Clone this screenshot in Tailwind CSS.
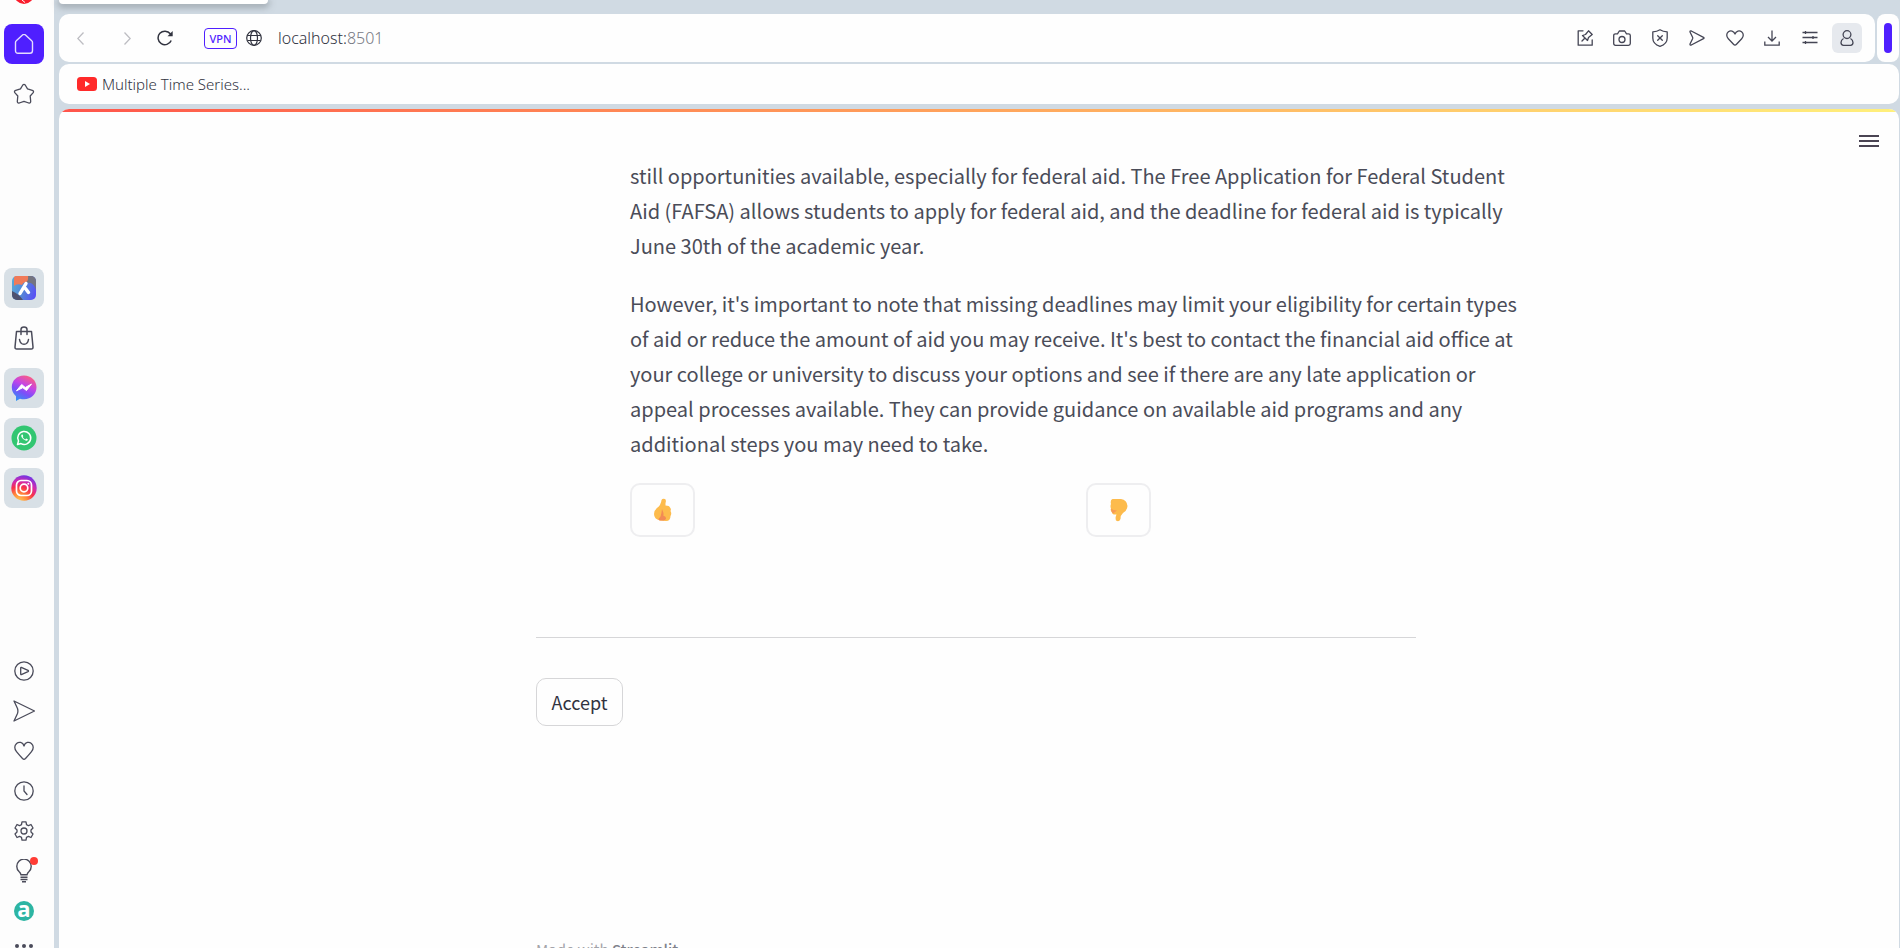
<!DOCTYPE html>
<html lang="en">
<head>
<meta charset="utf-8">
<title>localhost:8501</title>
<script src="https://cdn.jsdelivr.net/npm/@tailwindcss/browser@4"></script>
</head>
<body class="h-screen overflow-hidden bg-[#d0dae3] flex gap-[5px] font-['Noto_Sans_CJK_SC','Noto_Sans',sans-serif] text-[#31333f]">

<!-- Browser sidebar -->
<nav aria-label="Sidebar" class="w-[54px] h-full shrink-0 bg-[#fdfdfd] pl-1 flex flex-col text-[#4a4b5a] overflow-hidden">
  <div class="h-6 shrink-0 w-10 flex justify-center items-start">
    <svg class="w-5 h-1" viewBox="0 16 20 4" aria-hidden="true"><circle cx="10" cy="10" r="7.5" fill="none" stroke="#fa1e2d" stroke-width="5"/><path d="M8 16L11 18.500" stroke="#fff" stroke-width="1"/></svg>
  </div>
  <button aria-label="Home" class="w-10 h-10 shrink-0 rounded-lg bg-[#4f1fff] text-[#e4dcff] grid place-items-center">
    <svg class="w-5 h-5" viewBox="0 0 20 20" fill="none" stroke="currentColor" stroke-width="1.4" stroke-linejoin="round"><path d="M1.5 8.5Q1.5 7.5 2.3 6.8L8.5 1Q10 -.2 11.5 1L17.700 6.800Q18.500 7.500 18.500 8.500V16.500Q18.500 19.300 16 19.300H4Q1.500 19.300 1.500 16.500Z"/></svg>
  </button>
  <button aria-label="Favourites" class="w-10 h-10 shrink-0 mt-[10px] grid place-items-center">
    <svg class="w-[22px] h-[22px]" viewBox="0 0 22 22" fill="none" stroke="currentColor" stroke-width="1.3" stroke-linejoin="round"><path d="M9.800 2Q11 .6 12.200 2L14.500 5.800L19.300 7.300Q21.200 8 20.200 9.600L17.200 13L17.700 18.500Q17.600 20.400 15.800 20L11 18.300L6.200 20Q4.400 20.400 4.300 18.500L4.800 13L1.800 9.600Q.8 8 2.700 7.300L7.500 5.800Z"/></svg>
  </button>
  <div class="mt-[154px] shrink-0 flex flex-col gap-[10px]">
    <button aria-label="Aria" class="w-10 h-10 rounded-lg bg-[#d8e0e6] grid place-items-center">
      <svg class="w-6 h-6" viewBox="0 0 24 24"><defs><linearGradient id="ar" x1="0" y1="0.4" x2="1" y2="0.7"><stop offset="0" stop-color="#58a6d8"/><stop offset=".5" stop-color="#5583d8"/><stop offset="1" stop-color="#5a50f5"/></linearGradient><clipPath id="ac"><rect width="24" height="24" rx="5"/></clipPath></defs><g clip-path="url(#ac)"><rect width="24" height="24" fill="url(#ar)"/><path d="M2 0H18V6Q12 5 10 9Q5 7 2 10Z" fill="#f07a58"/><path d="M16 0H24V14C22 7 18 6 13 7Q17 5 16 0Z" fill="#74747f"/><path d="M0 15Q7 18 11 24H0Z" fill="#4e5170"/></g><path d="M14 7.500L8 17.500M13.500 12.500L16.500 16.500" stroke="#fff" stroke-width="3.400" stroke-linecap="round"/></svg>
    </button>
    <button aria-label="Shopping" class="w-10 h-10 grid place-items-center">
      <svg class="w-5 h-6" viewBox="0 0 20 24" fill="none" stroke="currentColor" stroke-width="1.500" stroke-linecap="round" stroke-linejoin="round"><path d="M2.500 5.500H17.500L19 21Q19.100 23 17.300 23H2.700Q.9 23 1 21ZM7 8.500V3.500Q7 1 10 1T13 3.500V8.500M5.500 13.500Q6.200 18.300 10 18.300T14.500 13.500"/></svg>
    </button>
    <button aria-label="Messenger" class="w-10 h-10 rounded-lg bg-[#d8e0e6] grid place-items-center">
      <svg class="w-[26px] h-[26px]" viewBox="0 0 26 26"><defs><linearGradient id="ms" x1=".75" y1="0" x2=".25" y2="1"><stop offset="0" stop-color="#ff5f7a"/><stop offset=".4" stop-color="#c244e8"/><stop offset=".65" stop-color="#7b4ff8"/><stop offset="1" stop-color="#2f94f5"/></linearGradient></defs><path d="M13 .5C5.800 .5 .8 5.600 .8 12.300Q.8 17.500 5 21.300V26L9 23.700Q11 24.200 13 24.200C20.200 24.200 25.500 19 25.500 12.300S20.200 .5 13 .5Z" fill="url(#ms)"/><path d="M5.500 15.800L10.700 9.500L14.300 12.500L20.500 9L15.500 15.500L11.800 12.700Z" fill="#fff" stroke="#fff" stroke-linejoin="round"/></svg>
    </button>
    <button aria-label="WhatsApp" class="w-10 h-10 rounded-lg bg-[#d8e0e6] grid place-items-center">
      <svg class="w-[26px] h-[26px]" viewBox="0 0 26 26"><circle cx="13" cy="13" r="12.500" fill="#32c671"/><path d="M6.500 19.500L7.500 16A6.500 6.500 0 1 1 10 18.600Z" fill="none" stroke="#fff" stroke-width="1.500" stroke-linejoin="round"/><path d="M10.800 9.500Q9.700 10.500 10.500 12Q12 15 15 15.800Q16.500 16 17 14.500L15.200 13.500L14.300 14.400Q12.500 13.600 11.700 12L12.300 11.200L11.600 9.500Z" fill="#fff"/></svg>
    </button>
    <button aria-label="Instagram" class="w-10 h-10 rounded-lg bg-[#d8e0e6] grid place-items-center">
      <svg class="w-[26px] h-[26px]" viewBox="0 0 26 26"><defs><radialGradient id="ig" cx=".3" cy="1.050" r="1.100"><stop offset="0" stop-color="#ffd05a"/><stop offset=".3" stop-color="#ff8a3a"/><stop offset=".55" stop-color="#f7304c"/><stop offset=".75" stop-color="#d02bb0"/><stop offset="1" stop-color="#6a35e8"/></radialGradient></defs><circle cx="13" cy="13" r="12.700" fill="url(#ig)"/><g fill="none" stroke="#fff" stroke-width="1.700"><rect x="5.500" y="5.500" width="15" height="15" rx="4.500"/><circle cx="13" cy="13" r="3.800"/></g><circle cx="17.300" cy="8.700" r="1" fill="#fff"/></svg>
    </button>
  </div>
  <div class="mt-[143px] shrink-0 flex flex-col">
    <button aria-label="Player" class="w-10 h-10 grid place-items-center"><svg class="w-5 h-5" viewBox="0 0 20 20" fill="none" stroke="currentColor" stroke-width="1.300" stroke-linejoin="round"><circle cx="10" cy="10" r="9.200"/><path d="M7.300 6.300L14 9.300Q15 10 14 10.600L7.300 13.600Q6.700 13.800 6.700 13V7Q6.700 6.200 7.300 6.300Z"/></svg></button>
    <button aria-label="My Flow" class="w-10 h-10 grid place-items-center"><svg class="w-[22px] h-[22px]" viewBox="0 0 22 22" fill="none" stroke="currentColor" stroke-width="1.300" stroke-linejoin="round"><path d="M1 1L21.500 11L1 21L4.500 13.500Q5.300 11 4.500 8.500Z"/></svg></button>
    <button aria-label="Bookmarks" class="w-10 h-10 grid place-items-center"><svg class="w-5 h-5" viewBox="0 0 20 20" fill="none" stroke="currentColor" stroke-width="1.300" stroke-linejoin="round"><path d="M10 5C8.800 .8 4.800 .6 2.600 2.400C.2 4.500 .2 8 2.500 10.600Q5 13.700 8.500 17.500Q10 19 11.500 17.500Q15 13.700 17.500 10.600C19.800 8 19.800 4.500 17.400 2.400C15.200 .6 11.200 .8 10 5Z"/></svg></button>
    <button aria-label="History" class="w-10 h-10 grid place-items-center"><svg class="w-5 h-5" viewBox="0 0 20 20" fill="none" stroke="currentColor" stroke-width="1.300" stroke-linecap="round"><circle cx="10" cy="10" r="9.200"/><path d="M10 5V10L13 13.500"/></svg></button>
    <button aria-label="Settings" class="w-10 h-10 grid place-items-center"><svg class="w-5 h-5" viewBox="0 0 20 20" fill="none" stroke="currentColor" stroke-width="1.300" stroke-linejoin="round"><circle cx="10" cy="10" r="3"/><path d="M8 .8H12L12.500 3.600L14.500 4.700L17 3.500L19 7L17 9V11L19 13L17 16.500L14.500 15.300L12.500 16.400L12 19.200H8L7.500 16.400L5.500 15.300L3 16.500L1 13L3 11V9L1 7L3 3.500L5.500 4.700L7.500 3.600Z"/></svg></button>
    <button aria-label="Tips" class="relative w-10 h-10 grid place-items-center"><svg class="w-4 h-6" viewBox="0 0 16 24" fill="none" stroke="currentColor" stroke-width="1.400"><path d="M5 15.800Q4.700 14 3 12.500A7.200 7.200 0 1 1 13 12.500Q11.300 14 11 15.800ZM4.500 18.200H11.500M4.500 20.500H11.500M6 22.800H10"/></svg><span class="absolute right-[6px] top-[6px] w-2 h-2 rounded-full bg-[#ff3c35]"></span></button>
    <button aria-label="Amazon Alexa" class="w-10 h-10 grid place-items-center"><span class="w-5 h-5 rounded-full bg-[#2db5a3] text-white font-['Open_Sans',sans-serif] font-bold text-[22px] leading-[14px] grid justify-center">a</span></button>
    <button aria-label="More" class="w-10 h-[17px] flex justify-center items-end gap-[3px]"><span class="w-1 h-1 rounded-full bg-[#4a4b5a]"></span><span class="w-1 h-1 rounded-full bg-[#4a4b5a]"></span><span class="w-1 h-1 rounded-full bg-[#4a4b5a]"></span></button>
  </div>
</nav>

<div class="flex-1 min-w-0 flex flex-col pr-px">
  <!-- Tab strip -->
  <div class="h-[14px] shrink-0"><div class="w-[209px] h-1 bg-white rounded-b-lg shadow-[0_2px_6px_2px_#8f989fb0]"></div></div>

  <!-- Address bar -->
  <div class="flex gap-[2px] shrink-0">
    <header class="flex-1 h-12 rounded-[10px] bg-[#fefefe] flex items-center justify-between pl-[11px] pr-[13px] font-['Noto_Sans',sans-serif]">
      <div class="flex items-center">
        <button aria-label="Back" class="w-5 h-6 grid place-items-center text-[#bdbdc2]"><svg class="w-[7px] h-[13px]" viewBox="0 0 7 13" fill="none" stroke="currentColor" stroke-width="1.300"><path d="M6.500 .5L.8 6.500L6.500 12.500"/></svg></button>
        <button aria-label="Forward" class="ml-[27px] w-5 h-6 grid place-items-center text-[#bdbdc2]"><svg class="w-[7px] h-[13px]" viewBox="0 0 7 13" fill="none" stroke="currentColor" stroke-width="1.300"><path d="M.5 .5L6.200 6.500L.5 12.500"/></svg></button>
        <button aria-label="Reload" class="ml-[18px] w-5 h-6 grid place-items-center"><svg class="w-4 h-4" viewBox="0 0 16 16" fill="none" stroke="currentColor" stroke-width="1.500"><path d="M14.200 10.500A6.800 6.800 0 1 1 13.300 3.800L14.300 5"/><path d="M15.700 1V6.200H10.500Z" fill="currentColor" stroke="none"/></svg></button>
        <button class="ml-[29px] w-[33px] h-[21px] rounded border border-[#4f1fff] text-[#4f1fff] text-[11px] leading-5 font-medium text-center">VPN</button>
        <svg class="ml-[9px] w-4 h-4" viewBox="0 0 16 16" fill="none" stroke="currentColor" stroke-width="1.200" aria-hidden="true"><circle cx="8" cy="8" r="7.300"/><ellipse cx="8" cy="8" rx="3.500" ry="7.300"/><path d="M1.500 5.500H14.500M1.500 10.500H14.500"/></svg>
        <a href="#" class="ml-4 text-base font-light text-[#31333f]">localhost:<span class="text-[#777983]">8501</span></a>
      </div>
      <div class="flex items-center justify-between w-[292px] text-[#454655]">
        <button aria-label="Pinboard" class="w-[30px] h-[30px] grid place-items-center"><svg class="w-4 h-4" viewBox="0 0 16 16" fill="none" stroke="currentColor" stroke-width="1.300" stroke-linejoin="round" stroke-linecap="round"><path d="M6 .8H1.200V15.200H15.200V10M11.500 .8L15.200 4.500L11.500 7.500L10.500 10.500L5.500 5.500L8.500 4.500ZM8 8L5 11"/></svg></button>
        <button aria-label="Snapshot" class="w-[30px] h-[30px] grid place-items-center"><svg class="w-[18px] h-4" viewBox="0 0 18 16" fill="none" stroke="currentColor" stroke-width="1.300" stroke-linejoin="round"><path d="M2.500 3.800H4.500L6.300 1H11.700L13.500 3.800H15.500Q17.300 3.800 17.300 5.500V13.500Q17.300 15.300 15.500 15.300H2.500Q.7 15.300 .7 13.500V5.500Q.7 3.800 2.500 3.800Z"/><circle cx="9" cy="9.500" r="3"/></svg></button>
        <button aria-label="Tracker blocker" class="w-[30px] h-[30px] grid place-items-center"><svg class="w-4 h-[18px]" viewBox="0 0 16 18" fill="none" stroke="currentColor" stroke-width="1.300" stroke-linejoin="round" stroke-linecap="round"><path d="M8 .8Q11 2.800 15.200 2.800V9Q15.200 15 8 17.300Q.8 15 .8 9V2.800Q5 2.800 8 .8ZM5.700 6.700L10.300 11.300M10.300 6.700L5.700 11.300"/></svg></button>
        <button aria-label="Send" class="w-[30px] h-[30px] grid place-items-center"><svg class="w-4 h-4" viewBox="0 0 16 16" fill="none" stroke="currentColor" stroke-width="1.300" stroke-linejoin="round"><path d="M2.300 1L14.500 7.300Q15.600 8 14.500 8.700L2.300 15Q.8 15.300 1 14L3.600 8.700Q3.900 8 3.600 7.300L1 2Q.8 .7 2.300 1Z"/></svg></button>
        <button aria-label="Bookmark" class="w-[30px] h-[30px] grid place-items-center"><svg class="w-[18px] h-4" viewBox="0 0 18 16" fill="none" stroke="currentColor" stroke-width="1.300" stroke-linejoin="round"><path d="M9 4C7.900 .6 4.500 .2 2.400 1.700C.2 3.500 .2 6.500 2.300 8.700L7.500 14.300Q9 15.900 10.500 14.300L15.700 8.700C17.800 6.500 17.800 3.500 15.600 1.700C13.500 .2 10.100 .6 9 4Z"/></svg></button>
        <button aria-label="Downloads" class="w-[30px] h-[30px] grid place-items-center"><svg class="w-4 h-4" viewBox="0 0 16 16" fill="none" stroke="currentColor" stroke-width="1.300"><path d="M8 .5V11M4 7L8 11L12 7M.8 11.500V15.200H15.200V11.500"/></svg></button>
        <button aria-label="Easy setup" class="w-[30px] h-[30px] grid place-items-center"><svg class="w-4 h-4" viewBox="0 0 16 16" fill="none" stroke="currentColor" stroke-width="1.300"><path d="M.5 2.500H15.500M.5 7.500H15.500M.5 12.500H15.500M3.500 1V4M11 6V9M3.500 11V14"/></svg></button>
        <button aria-label="Profile" class="w-[30px] h-[30px] rounded-md bg-[#e6e9ee] grid place-items-center"><svg class="w-4 h-4" viewBox="0 0 16 16" fill="none" stroke="currentColor" stroke-width="1.300" stroke-linejoin="round"><circle cx="8" cy="4.600" r="3.900"/><path d="M4.500 8.500Q2 9.800 2 12.500Q2 15.300 4.500 15.300H11.500Q14 15.300 14 12.500Q14 9.800 11.500 8.500"/></svg></button>
      </div>
    </header>
    <div class="w-[22px] h-12 rounded-lg bg-[#fefefe] grid place-items-center"><button aria-label="Side panel" class="w-2 h-[30px] rounded bg-[#4f1fff]"></button></div>
  </div>

  <!-- Bookmarks bar -->
  <div class="mt-[2px] h-10 shrink-0 rounded-[10px] bg-[#fefefe] flex items-center pl-[18px]">
    <a href="#" class="flex items-center gap-[5px] font-['Noto_Sans',sans-serif] font-light text-[15px]">
      <svg class="w-5 h-[14px]" viewBox="0 0 20 14" aria-hidden="true"><rect width="20" height="14" rx="3.500" fill="#ff2a2a"/><path d="M8 4L13 7L8 10Z" fill="#fff"/></svg>
      Multiple Time Series...
    </a>
  </div>

  <!-- Streamlit page -->
  <div class="mt-[5px] flex-1 min-h-0 rounded-t-[10px] bg-[#fefefe] overflow-hidden flex flex-col">
    <div class="h-[3px] shrink-0 bg-linear-to-r from-[#ff544b] via-[#ffa45c] to-[#fff07c]"></div>
    <div class="h-[42px] shrink-0 flex justify-end items-end pr-5 pb-[6px]">
      <button aria-label="Main menu" class="w-5 flex flex-col gap-[3px] pb-px"><span class="h-[2px] bg-[#4a4453]"></span><span class="h-[2px] bg-[#4a4453]"></span><span class="h-[2px] bg-[#4a4453]"></span></button>
    </div>
    <main class="w-full pr-[6px]">
      <div class="w-full max-w-[880px] mx-auto">
        <section class="ml-[94px] -mr-[94px]">
          <div class="-mr-6 text-[20px] leading-[35px] text-[#4a4c58] flex flex-col gap-[23px] pt-1">
            <p>still opportunities available, especially for federal aid. The Free Application for Federal Student Aid (FAFSA) allows students to apply for federal aid, and the deadline for federal aid is typically June 30th of the academic year.</p>
            <p>However, it's important to note that missing deadlines may limit your eligibility for certain types of aid or reduce the amount of aid you may receive. It's best to contact the financial aid office at your college or university to discuss your options and see if there are any late application or appeal processes available. They can provide guidance on available aid programs and any additional steps you may need to take.</p>
          </div>
          <div class="grid grid-cols-2 gap-8 mt-[22px]">
            <button aria-label="Thumbs up" class="w-[65px] h-[54px] rounded-[10px] border-2 border-[#eeeef0] grid place-items-center"><svg class="w-5 h-6" viewBox="0 0 20 24"><path d="M8.500 2Q9.500 0 12 1Q13.500 2 12.500 5V7.500Q16.500 7.500 17 9.500Q18.500 11 17.500 13Q19 15.500 17.500 18Q17.500 23 13 23L7 22.500Q1 21 1 16Q1 12.500 4 10Q8 7 8.500 2Z" fill="#fdbb4c"/><path d="M9 11Q11 15 10.500 18Q13 18 13 21L11 22.500H7Q5 22 6 20Q8 20 9 11Z" fill="#f28a55"/></svg></button>
            <button aria-label="Thumbs down" class="w-[65px] h-[54px] rounded-[10px] border-2 border-[#eeeef0] grid place-items-center"><svg class="w-5 h-6" viewBox="0 0 20 24"><path d="M3.500 1H12Q18 2 18.500 8Q18 13 14 15Q11.500 17 11.500 21Q10 24.500 7 22.500Q6 20 7.500 16.500Q3 17 3 14Q1 12.500 2 10.500Q1 8 2 6Q1 2 3.500 1Z" fill="#fdbb4c"/><path d="M2 10.500Q4 12.500 8 12.500L4 15.500Q2 14 2 10.500Z" fill="#f79a55"/></svg></button>
          </div>
        </section>
        <hr class="mt-[100px] border-[#d6d6d8]">
        <button class="mt-10 w-[87px] h-12 rounded-[10px] border border-[#d6d6d8] text-[18px] text-center">Accept</button>
        <footer class="mt-[212px] text-[15px] leading-6 whitespace-nowrap text-[#a3a4a9]">Made with <a href="#" class="text-[#80828b] font-medium">Streamlit</a></footer>
      </div>
    </main>
  </div>
</div>
</body>
</html>
